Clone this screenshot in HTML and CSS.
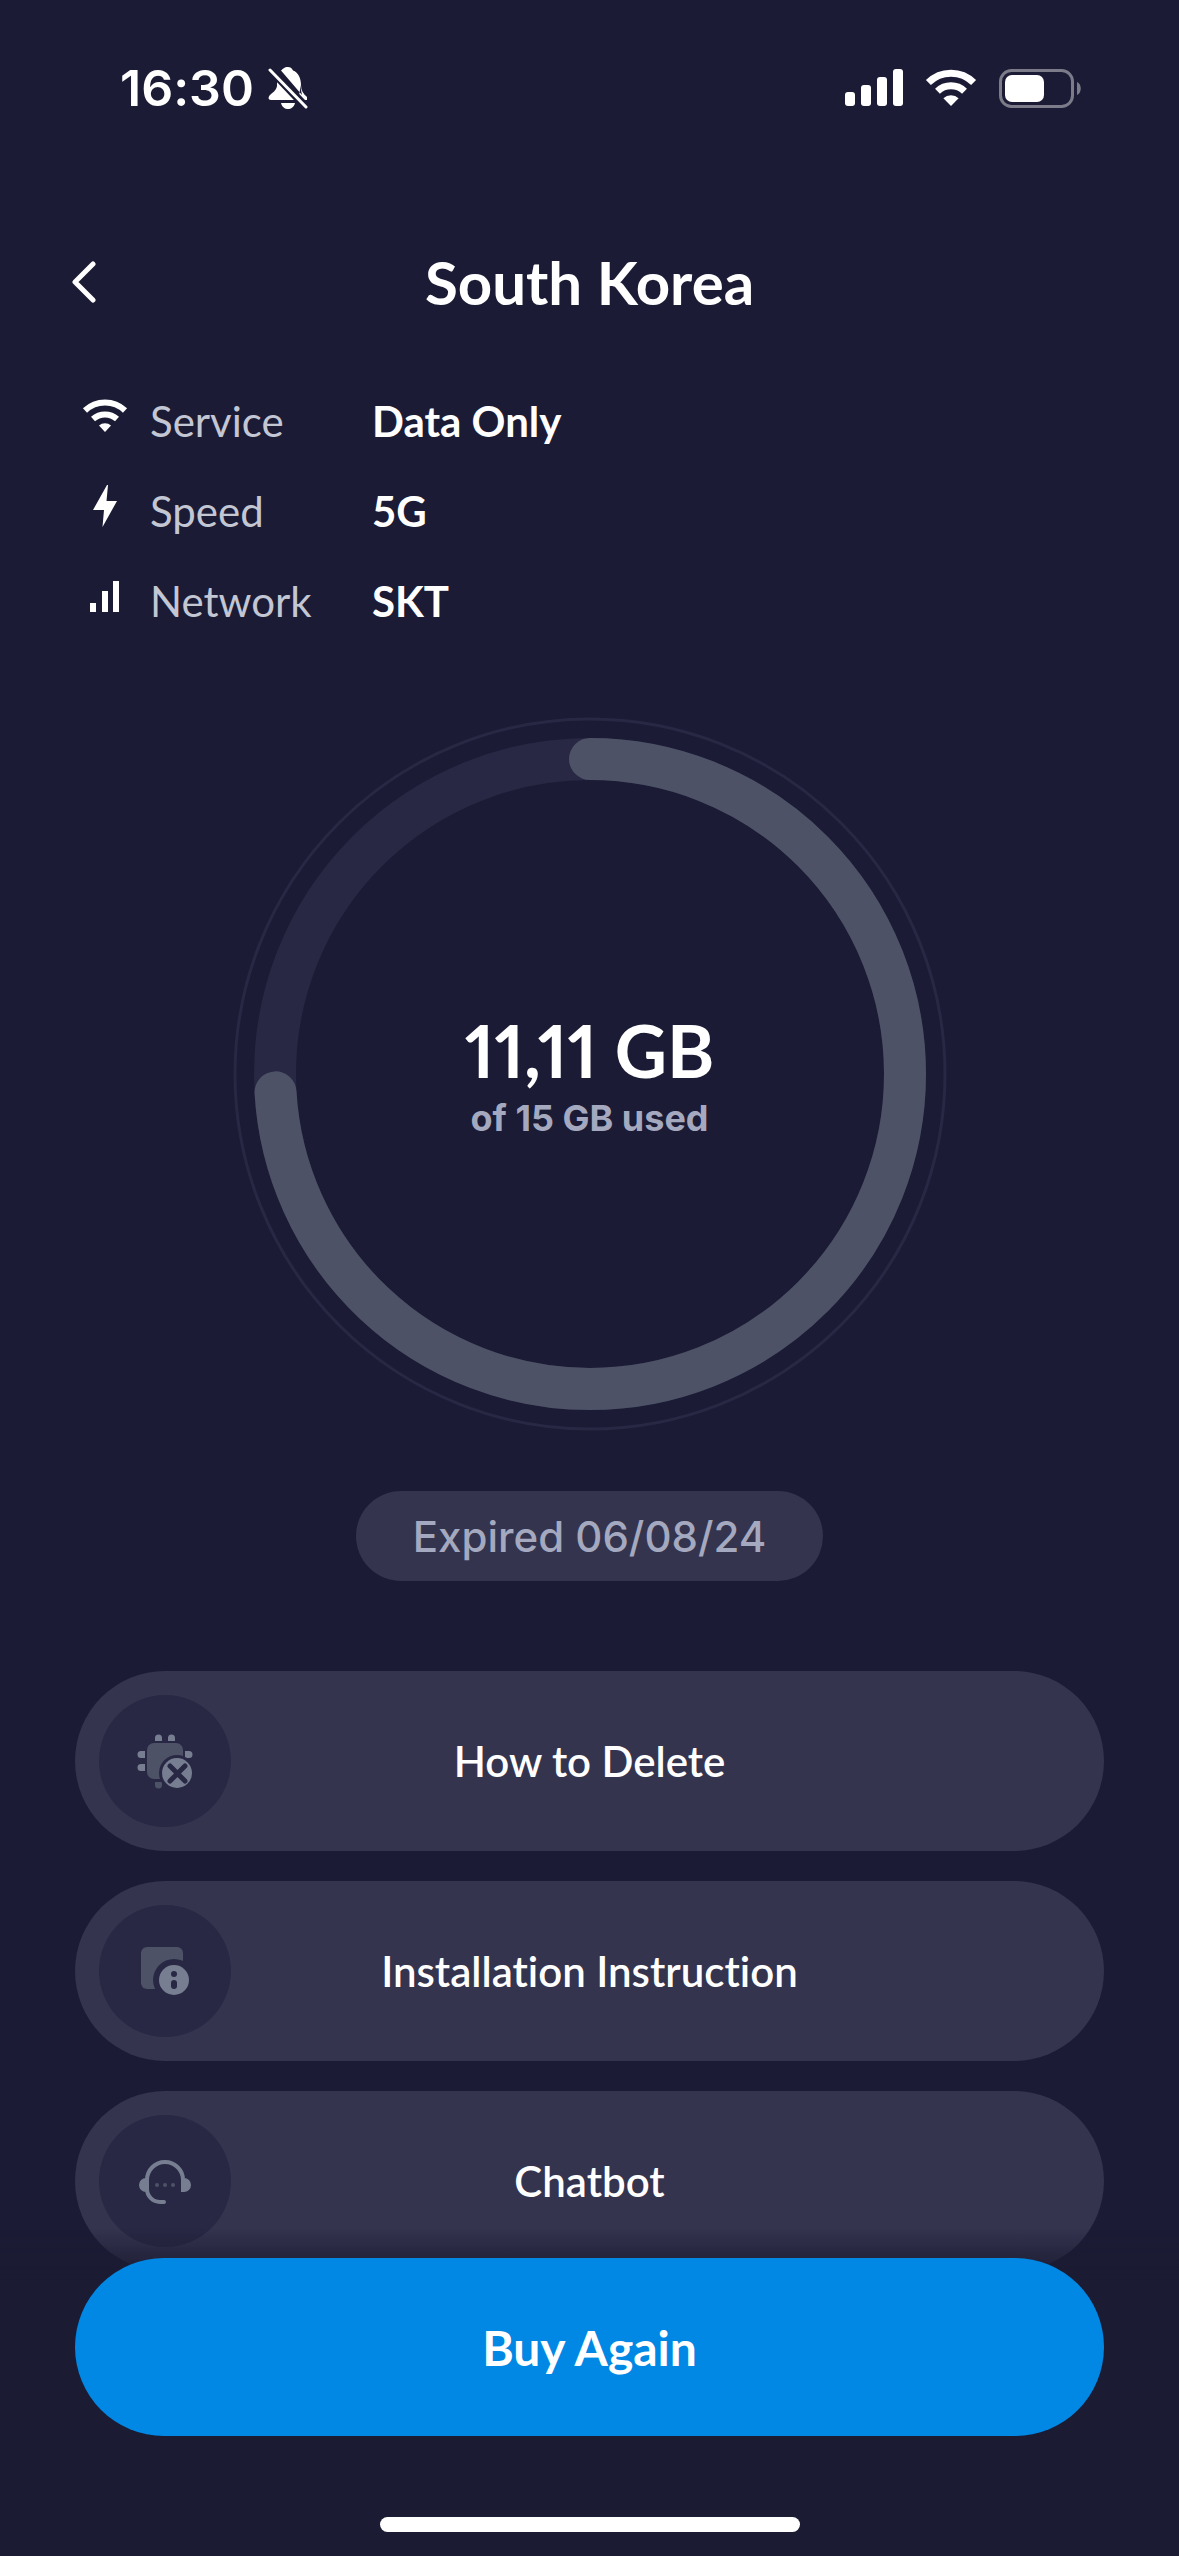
FILE: index.html
```html
<!DOCTYPE html>
<html lang="en">
<head>
<meta charset="utf-8">
<meta name="viewport" content="width=device-width, initial-scale=1">
<title>South Korea</title>
<link rel="stylesheet" href="styles.css">
</head>
<body>
<div class="screen">
  <div class="status">
    <div class="status-group">
      <span class="clock">16:30</span>
      <svg class="bell" viewBox="0 0 40 44" width="40" height="44" aria-hidden="true">
        <path fill="#fff" d="M20 1c-4 0-5 2-7 3.500L34 29c-1-4-1-6-1-10 0-7-3-13-8-14.500C24 2 22 1 20 1zM33 19c0 5 2 9 6 12v3H28L10 11c-1 4-1 6-1 9-1 5-4 6-7 9-2 2-2 5 1 5h27zM13 37h14c-1 4-4 6-7 6s-6-2-7-6z"/>
        <path stroke="#1b1b35" stroke-width="8" d="M3 4l35 37"/>
        <path stroke="#fff" stroke-width="3" stroke-linecap="round" d="M2 4l36 37"/>
      </svg>
    </div>
    <div class="status-group status-right">
      <svg viewBox="0 0 58 38" width="58" height="38" fill="#fff" aria-hidden="true">
        <rect x="0" y="23" width="10" height="14" rx="3"/><rect x="16" y="16" width="10" height="21" rx="3"/><rect x="32" y="8" width="10" height="29" rx="3"/><rect x="48" y="0" width="10" height="37" rx="3"/>
      </svg>
      <svg viewBox="0 0 50 38" width="52" height="38" aria-hidden="true">
        <g fill="none" stroke="#fff" stroke-width="7"><path d="M2.400 13.500a32 32 0 0 1 45.200 0"/><path d="M11.500 22.300a19.500 19.500 0 0 1 27 0"/></g>
        <path fill="#fff" d="M25 37l-7.600-7.800a11 11 0 0 1 15.200 0z"/>
      </svg>
      <svg viewBox="0 0 82 39" width="82" height="39" aria-hidden="true">
        <rect x="1.500" y="1.500" width="72" height="36" rx="11" fill="none" stroke="#7b7b8a" stroke-width="3"/>
        <rect x="6" y="6" width="39" height="27" rx="7" fill="#fff"/>
        <path fill="#7b7b8a" d="M78 13c5 2 5 11 0 13z"/>
      </svg>
    </div>
  </div>

  <header class="header">
    <button class="back" aria-label="Back">
      <svg viewBox="0 0 24 42" width="24" height="42" aria-hidden="true"><path fill="none" stroke="#fff" stroke-width="5" stroke-linecap="round" stroke-linejoin="round" d="M21 3L3 21l18 18"/></svg>
    </button>
    <h1 class="title">South Korea</h1>
  </header>

  <main class="main">
    <dl class="specs">
      <div class="spec">
        <svg viewBox="0 0 46 46" width="46" height="46" aria-hidden="true">
          <g fill="none" stroke="#fff" stroke-width="6"><path d="M3 16.500a29 29 0 0 1 40 0"/><path d="M11 25a18 18 0 0 1 24 0"/></g>
          <path fill="#fff" d="M23 38l-6-6.500a9 9 0 0 1 12 0z"/>
        </svg>
        <dt>Service</dt><dd>Data Only</dd>
      </div>
      <div class="spec">
        <svg viewBox="0 0 46 46" width="46" height="46" aria-hidden="true"><path fill="#fff" d="M25 1L11 26h11l-1.500 17L35 17H24.500L26 1z"/></svg>
        <dt>Speed</dt><dd>5G</dd>
      </div>
      <div class="spec">
        <svg viewBox="0 0 46 46" width="46" height="46" fill="#fff" aria-hidden="true"><path d="M8 29h6v9H8zM20 17h6v21h-6zM31 7h6v31h-6z"/></svg>
        <dt>Network</dt><dd>SKT</dd>
      </div>
    </dl>

    <section class="gauge" aria-label="Data usage">
      <svg class="gauge-ring" viewBox="0 0 714 714" aria-hidden="true">
        <g fill="none" transform="rotate(-90 357 357)">
          <circle cx="357" cy="357" r="355" stroke="#282844" stroke-width="3"/>
          <circle cx="357" cy="357" r="315" stroke="#282844" stroke-width="42"/>
          <circle cx="357" cy="357" r="315" stroke="#4d5267" stroke-width="42" stroke-linecap="round" pathLength="1500" stroke-dasharray="1111 1500"/>
        </g>
      </svg>
      <div class="gauge-text">
        <p class="amount">11,11 GB</p>
        <p class="total">of 15 GB used</p>
      </div>
    </section>

    <p class="expired">Expired 06/08/24</p>

    <nav class="actions">
      <button class="action">
        <span class="disc">
          <svg viewBox="0 0 56 56" width="56" height="56" aria-hidden="true">
            <path fill="#787e92" d="M18 8V5a3 3 0 0 1 7 0v3zM31 8V5a3 3 0 0 1 7 0v3zM8 18H4a3 3 0 0 0 0 7h4zM8 31H4a3 3 0 0 0 0 7h4zM48 18h4a3 3 0 0 1 0 7h-4z"/>
            <path fill="#4d5267" d="M18 49h7v3a3 3 0 0 1-7 0z"/>
            <rect x="10" y="10" width="36" height="36" rx="7" fill="#4d5267"/>
            <circle cx="40" cy="40" r="18" fill="#282844"/>
            <circle cx="40" cy="40" r="15" fill="#787e92"/>
            <path stroke="#282844" stroke-width="5" stroke-linecap="round" d="M33 33l15 15M48 33L33 48"/>
          </svg>
        </span>
        <span class="label">How to Delete</span>
      </button>
      <button class="action">
        <span class="disc">
          <svg viewBox="0 0 56 56" width="56" height="56" aria-hidden="true">
            <rect x="4" y="4" width="42" height="42" rx="6" fill="#4d5267"/>
            <circle cx="37" cy="37" r="21" fill="#282844"/>
            <circle cx="37" cy="37" r="15" fill="#787e92"/>
            <circle cx="37" cy="31" r="3" fill="#282844"/><rect x="34" y="37" width="6" height="9" rx="3" fill="#282844"/>
          </svg>
        </span>
        <span class="label">Installation Instruction</span>
      </button>
      <button class="action">
        <span class="disc">
          <svg viewBox="0 0 56 56" width="56" height="56" aria-hidden="true">
            <path fill="none" stroke="#787e92" stroke-width="4" stroke-linecap="round" d="M46 27V27a18 18 0 0 0-36 0v9a13 13 0 0 0 13 13h4"/>
            <path fill="#787e92" d="M12 25H9a7 7 0 0 0 0 14h3zM44 25h3a7 7 0 0 1 0 14h-3z"/>
            <g fill="#4d5267"><circle cx="20" cy="32" r="2"/><circle cx="28" cy="32" r="2"/><circle cx="36" cy="32" r="2"/></g>
          </svg>
        </span>
        <span class="label">Chatbot</span>
      </button>
    </nav>
  </main>

  <footer class="footer">
    <button class="buy">Buy Again</button>
    <div class="home"></div>
  </footer>
</div>
</body>
</html>
```
FILE: styles.css
```css
* { box-sizing: border-box; }
html { background: #1b1b35; }
body { margin: 0; background: #1b1b35; color: #fff; font-family: Lato, "Open Sans", sans-serif; font-variant-ligatures: none; }
h1, p, dl, dd { margin: 0; }
svg { display: block; flex: none; }
button { border: 0; margin: 0; color: inherit; font-family: inherit; font-variant-ligatures: inherit; cursor: pointer; }

.screen { min-height: 100vh; padding-bottom: 300px; }

.status { display: flex; justify-content: space-between; align-items: center; height: 176px; padding: 0 98px 0 120px; }
.status-group { display: flex; align-items: center; gap: 14px; }
.status-right { gap: 22px; }
.clock { font-family: Inter, sans-serif; font-size: 50px; font-weight: 600; line-height: 60px; }

.header { display: grid; grid-template-columns: 120px 1fr 120px; align-items: center; height: 212px; }
.back { justify-self: start; display: flex; padding: 20px 24px 20px 72px; background: none; }
.title { text-align: center; font-size: 60px; font-weight: 700; line-height: 72px; }

.main { display: flex; flex-direction: column; align-items: center; padding: 0 75px; }
.specs { align-self: stretch; display: grid; gap: 36px; padding: 6px 7px 0; }
.spec { display: grid; grid-template-columns: 46px 200px 1fr; column-gap: 22px; line-height: 54px; font-size: 42px; }
.spec dt { color: #c3c6d3; }
.spec dd { font-weight: 700; }

.gauge { position: relative; width: 100%; max-width: 714px; margin-top: 89px; }
.gauge-ring { width: 100%; }
.gauge-text { position: absolute; inset: 0; display: flex; flex-direction: column; align-items: center; justify-content: center; gap: 4px; padding-top: 4px; }
.amount { font-size: 72px; font-weight: 700; line-height: 80px; font-variant-numeric: proportional-nums; }
.total { color: #a4a9bf; font-family: Inter, sans-serif; font-size: 36px; font-weight: 700; line-height: 48px; }

.expired { margin-top: 60px; padding: 2px 57px 0; border-radius: 45px; background: #35344f; color: #a4a9bf; font-family: Inter, sans-serif; font-size: 42px; font-weight: 500; line-height: 88px; }

.actions { align-self: stretch; display: grid; gap: 30px; margin-top: 90px; }
.action { display: grid; grid-template-columns: 132px 1fr 132px; align-items: center; padding: 24px; border-radius: 90px; background: #35344f; font-size: 42px; font-weight: 600; }
.disc { display: grid; place-items: center; height: 132px; border-radius: 50%; background: #282844; }

.footer { position: fixed; left: 0; right: 0; bottom: 0; padding: 30px 75px 24px; background: linear-gradient(#1b1b3500, #1b1b33 48px); }
.buy { display: block; width: 100%; height: 178px; border-radius: 90px; background: #0088e4; font-size: 48px; font-weight: 700; }
.home { width: 420px; height: 15px; margin: 81px auto 0; border-radius: 8px; background: #fff; }
```
